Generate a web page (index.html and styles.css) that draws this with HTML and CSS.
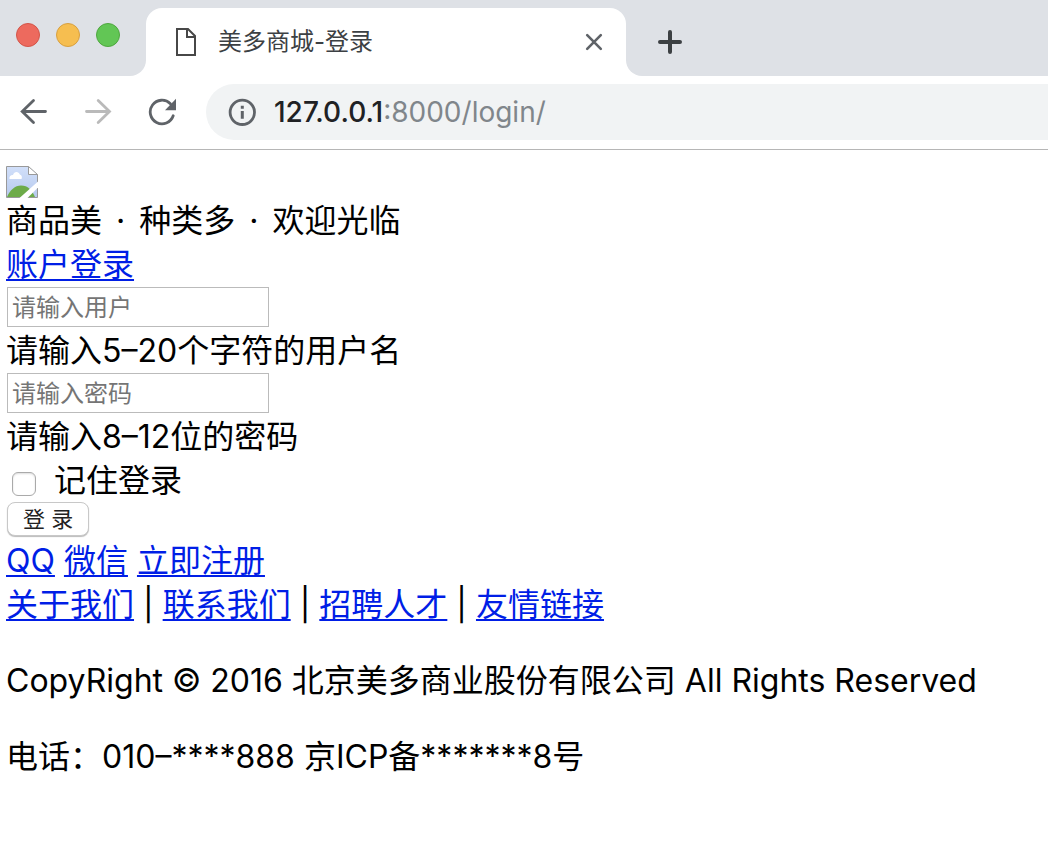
FILE: index.html
```html
<!DOCTYPE html>
<html lang="zh-CN">
<head>
<meta charset="utf-8">
<title>美多商城-登录</title>
<link rel="stylesheet" href="styles.css">
</head>
<body>
<header class="browser">
  <div class="tab-strip">
    <div class="window-controls">
      <button class="dot dot-close" type="button" aria-label="关闭窗口"></button>
      <button class="dot dot-minimize" type="button" aria-label="最小化"></button>
      <button class="dot dot-zoom" type="button" aria-label="缩放"></button>
    </div>
    <div class="tab-slot">
      <div class="tab">
        <svg class="tab-icon" width="20" height="28" viewBox="0 0 20 28" fill="none" stroke="#474747" stroke-width="2"><path d="M1 1H12L19 8V27H1Z"/><path d="M11 1V9H19"/></svg>
        <span class="tab-title">美多商城-登录</span>
        <button class="icon-button" type="button" aria-label="关闭标签页">
          <svg width="18" height="18" viewBox="0 0 18 18" stroke="#5f6368" stroke-width="2.6" stroke-linecap="round"><path d="M2.2 2.2L15.8 15.8M15.8 2.2L2.2 15.8"/></svg>
        </button>
      </div>
    </div>
    <div class="strip-rest">
      <button class="icon-button" type="button" aria-label="新标签页">
        <svg width="24" height="24" viewBox="0 0 24 24" stroke="#3c4043" stroke-width="4" stroke-linecap="round"><path d="M12 2V22M2 12H22"/></svg>
      </button>
    </div>
  </div>
  <div class="toolbar">
    <button class="icon-button" type="button" aria-label="后退">
      <svg width="28" height="28" viewBox="0 0 28 28" fill="none" stroke="#5f6368" stroke-width="2.8" stroke-linecap="round"><path d="M25.500 13.500H2.500M13.500 2.400L2.200 13.500L13.500 24.600"/></svg>
    </button>
    <button class="icon-button" type="button" aria-label="前进">
      <svg width="28" height="28" viewBox="0 0 28 28" fill="none" stroke="#bababa" stroke-width="2.8" stroke-linecap="round"><path d="M2.500 13.500H25M14.200 2.400L25.500 13.500L14.200 24.600"/></svg>
    </button>
    <button class="icon-button" type="button" aria-label="重新加载">
      <svg width="28" height="28" viewBox="0 0 28 28"><path d="M25.200 17.800A11.800 11.800 0 1 1 22.400 5.700" fill="none" stroke="#5f6368" stroke-width="2.8" stroke-linecap="round"/><path d="M28 .8V12.200H17Z" fill="#5f6368"/></svg>
    </button>
    <div class="address">
      <svg width="28" height="28" viewBox="0 0 28 28"><circle cx="14.300" cy="14.300" r="12.200" fill="none" stroke="#5f6368" stroke-width="2.800"/><path d="M14.300 13V20.800M14.300 7.800V10.800" stroke="#5f6368" stroke-width="3"/></svg>
      <span class="url">127.0.0.1<span class="url-path">:8000/login/</span></span>
    </div>
  </div>
</header>
<main class="page">
  <svg class="broken-image" role="img" aria-label="logo" width="32" height="32" viewBox="0 0 32 32">
    <defs><linearGradient id="sky" x1="0" y1="0" x2="0" y2="1"><stop offset="0" stop-color="#d2e0fa"/><stop offset="1" stop-color="#b6c9ed"/></linearGradient></defs>
    <path d="M.5 .5H22.500L31.500 8.500V31.500H.5Z" fill="url(#sky)"/>
    <path d="M3.500 13C3 10 5 8.800 7 9C8 4.800 13 5.200 13.800 8.600C16 9 16.300 11.500 15.500 13Z" fill="#fff"/>
    <path d="M1 31C4 24 9 19.500 15 19.500C22 19.500 26 24 29 31Z" fill="#6dab49"/>
    <path d="M22.500 .5V8.500H31.500Z" fill="#fff"/>
    <path d="M31.500 8.500V31.500H.5V.5H22.500L31.500 8.500H22.500V.5" fill="none" stroke="#999"/>
    <path d="M13.500 32L32 15.500V21.500L21.500 32Z" fill="#fff"/>
  </svg>
  <div class="line">商品美 <span class="sep">·</span> 种类多 <span class="sep">·</span> 欢迎光临</div>
  <div class="line"><a href="#">账户登录</a></div>
  <form class="login">
    <input class="field" type="text" placeholder="请输入用户" aria-label="用户名">
    <div class="line">请输入5–20个字符的用户名</div>
    <input class="field" type="password" placeholder="请输入密码" aria-label="密码">
    <div class="line">请输入8–12位的密码</div>
    <div class="remember"><input class="check" type="checkbox" id="remember"><label for="remember">记住登录</label></div>
    <button class="submit" type="submit">登 录</button>
  </form>
  <div class="line"><a href="#">QQ</a> <a href="#">微信</a> <a href="#">立即注册</a></div>
  <footer>
    <div class="line"><a href="#">关于我们</a> | <a href="#">联系我们</a> | <a href="#">招聘人才</a> | <a href="#">友情链接</a></div>
    <p class="note">CopyRight © 2016 北京美多商业股份有限公司 All Rights Reserved</p>
    <p class="note">电话：010–****888 京ICP备*******8号</p>
  </footer>
</main>
</body>
</html>
```
FILE: styles.css
```css
* { box-sizing: border-box; }
body {
  margin: 0;
  background: #fff;
  color: #000;
  font: 32px/44px Inter, "Noto Sans CJK SC", sans-serif;
}
button { font: inherit; }
svg { display: block; flex: none; }
.browser { border-bottom: 1px solid #b6b6b6; }
.tab-strip { display: flex; height: 76px; }
.window-controls {
  display: flex;
  gap: 16px;
  width: 146px;
  padding: 23px 0 0 16px;
  background: #dee1e6;
  border-bottom-right-radius: 16px;
}
.dot { width: 24px; height: 24px; padding: 0; border: 1px solid; border-radius: 50%; }
.dot-close { background: #ed6a5e; border-color: #d35549; }
.dot-minimize { background: #f6be50; border-color: #d8a040; }
.dot-zoom { background: #62c655; border-color: #4fa73f; }
.tab-slot { width: 480px; padding-top: 8px; background: linear-gradient(#dee1e6 50%, #fff 50%); }
.tab {
  display: flex;
  align-items: center;
  height: 68px;
  padding: 0 23px 0 30px;
  background: #fff;
  border-radius: 16px 16px 0 0;
}
.tab-title {
  flex: 1;
  margin-left: 22px;
  color: #3c4043;
  font: 24px/32px Inter, "Noto Sans CJK SC", sans-serif;
}
.icon-button { display: flex; padding: 0; border: 0; background: none; }
.strip-rest {
  flex: 1;
  display: flex;
  align-items: center;
  padding: 8px 0 0 32px;
  background: #dee1e6;
  border-bottom-left-radius: 16px;
}
.toolbar { display: flex; align-items: center; gap: 36px; height: 73px; padding: 0 0 1px 20px; }
.address {
  flex: 1;
  display: flex;
  align-items: center;
  gap: 18px;
  height: 56px;
  margin-left: -6px;
  padding-left: 22px;
  background: #f1f3f4;
  border-radius: 28px 0 0 28px;
}
.url { color: #202124; font: 500 28px/36px Inter, sans-serif; }
.url-path { color: #80868b; font-weight: 400; }
.page { padding: 16px 6px; }
.broken-image { margin-bottom: 1px; }
.sep { padding: 0 5px; }
a { color: #001ee6; text-decoration-thickness: 2px; text-underline-offset: 3px; }
.login { margin: 0; }
.field {
  display: block;
  width: 262px;
  height: 40px;
  margin: 0 1px 2px;
  padding: 0 4px;
  border: 1px solid #bbb;
  background: #fff;
  font: 24px/32px Inter, "Noto Sans CJK SC", sans-serif;
}
.field::placeholder { color: #757575; }
.remember { display: flex; align-items: center; gap: 18px; padding-left: 6px; }
.check {
  appearance: none;
  width: 24px;
  height: 24px;
  margin: 5px 0 0;
  border: 1px solid #aaa;
  border-radius: 6px;
  background: #fff;
  box-shadow: inset 0 1px 2px #ddd;
}
.submit {
  display: block;
  height: 34px;
  margin: -1px 1px 3px;
  padding: 0 15px;
  border: 1px solid #c8c8c8;
  border-radius: 8px;
  background: #fff;
  box-shadow: 0 1px 1px #bbb;
  color: #222;
  font: 22px/32px Inter, "Noto Sans CJK SC", sans-serif;
}
.note { margin: 32px 0; }
```
